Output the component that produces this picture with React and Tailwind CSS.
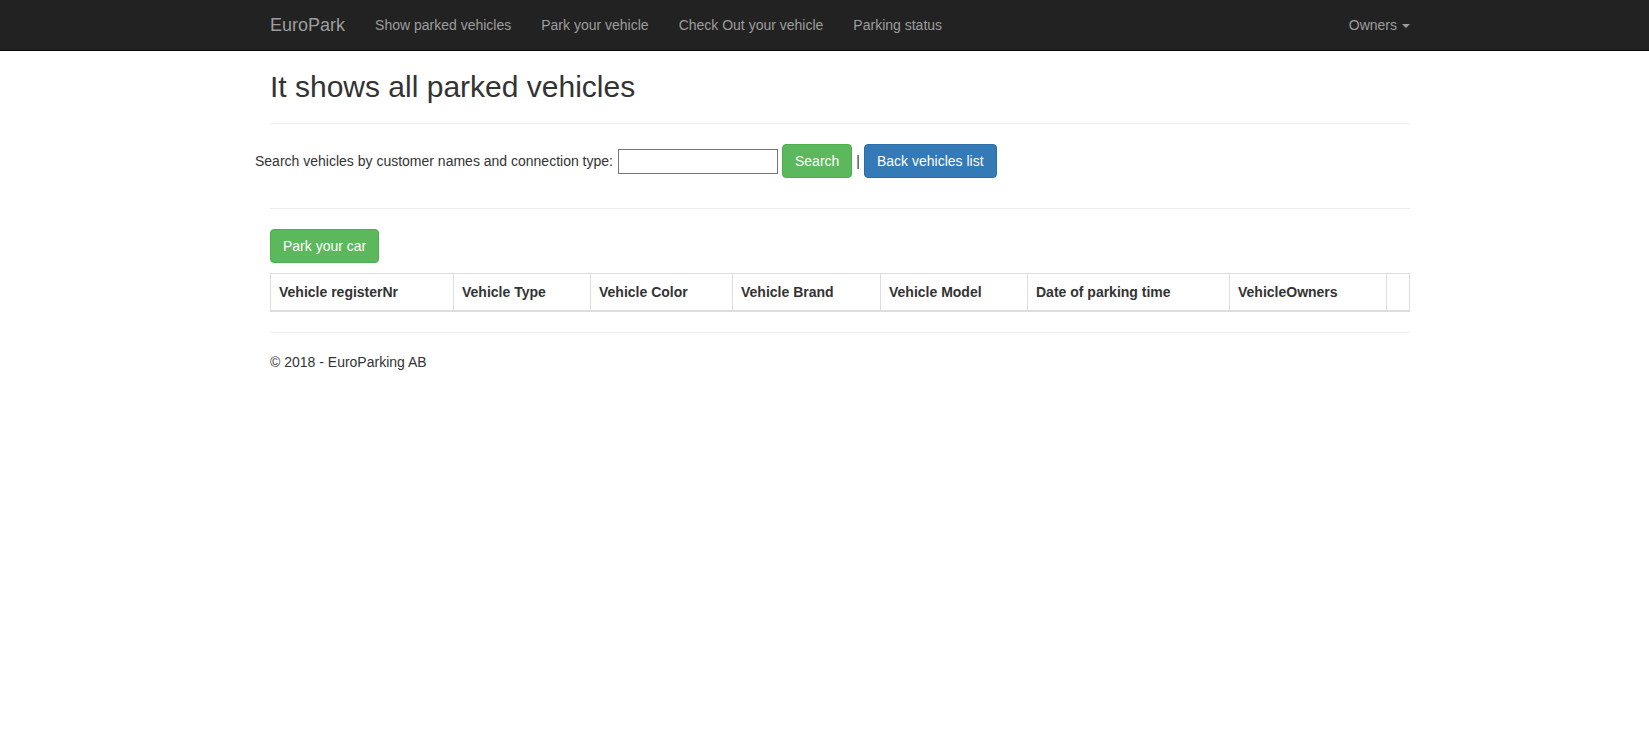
import React, { useState } from 'react';

const navLinks = ['Show parked vehicles', 'Park your vehicle', 'Check Out your vehicle', 'Parking status'];

const columns = [
    { label: 'Vehicle registerNr', width: 'w-[183px]' },
    { label: 'Vehicle Type', width: 'w-[137px]' },
    { label: 'Vehicle Color', width: 'w-[142px]' },
    { label: 'Vehicle Brand', width: 'w-[148px]' },
    { label: 'Vehicle Model', width: 'w-[147px]' },
    { label: 'Date of parking time', width: 'w-[202px]' },
    { label: 'VehicleOwners', width: 'w-[157px]' },
    { label: '', width: '' },
];

const App = () => {
    const [search, setSearch] = useState('');

    return (
        <div className="min-h-screen bg-white font-['Liberation_Sans',Arial,sans-serif] text-[14px] leading-[20px] text-[#333]">
            {/* Navbar */}
            <nav className="h-[51px] bg-[#222] border-b border-[#080808]">
                <div className="ml-[255px] w-[1170px] px-[15px] flex items-center h-[50px]">
                    <a href="#" className="-ml-[15px] px-[15px] py-[15px] text-[18px] leading-[20px] text-[#9d9d9d]">
                        EuroPark
                    </a>
                    {navLinks.map((link) => (
                        <a key={link} href="#" className="px-[15px] py-[15px] text-[#9d9d9d]">
                            {link}
                        </a>
                    ))}
                    <a href="#" className="ml-auto -mr-[15px] px-[15px] py-[15px] text-[#9d9d9d] flex items-center">
                        Owners
                        <span className="ml-[5px] mt-[1px] w-0 h-0 border-x-[4px] border-x-transparent border-t-[4px] border-t-[#9d9d9d]" />
                    </a>
                </div>
            </nav>

            <div className="ml-[255px] w-[1170px] px-[15px]">
                <h2 className="mt-[19px] text-[30px] leading-[33px] font-medium">It shows all parked vehicles</h2>
                <hr className="mt-[20px] border-0 border-t border-[#eee]" />

                {/* Search form */}
                <form className="mt-[20px] -ml-[15px] flex items-center gap-[4px] h-[34px]" onSubmit={(e) => e.preventDefault()}>
                    <label className="whitespace-nowrap">Search vehicles by customer names and connection type:</label>
                    <input
                        type="text"
                        value={search}
                        onChange={(e) => setSearch(e.target.value)}
                        className="ml-[1px] w-[160px] h-[25px] border border-[#767676] px-[2px] outline-none"
                    />
                    <button type="submit" className="px-[12px] py-[6px] rounded-[4px] border border-[#4cae4c] bg-[#5cb85c] text-white">
                        Search
                    </button>
                    <span>|</span>
                    <button type="button" className="px-[12px] py-[6px] rounded-[4px] border border-[#2e6da4] bg-[#337ab7] text-white">
                        Back vehicles list
                    </button>
                </form>

                <hr className="mt-[30px] border-0 border-t border-[#eee]" />

                <div className="mt-[20px]">
                    <button type="button" className="px-[12px] py-[6px] rounded-[4px] border border-[#4cae4c] bg-[#5cb85c] text-white">
                        Park your car
                    </button>
                </div>

                {/* Vehicles table */}
                <table className="mt-[10px] w-full table-fixed border-collapse border border-[#ddd]">
                    <thead>
                        <tr>
                            {columns.map((col, i) => (
                                <th
                                    key={i}
                                    className={`${col.width} p-[8px] text-left font-bold border border-[#ddd] border-b-2`}
                                >
                                    {col.label}
                                </th>
                            ))}
                        </tr>
                    </thead>
                </table>

                <hr className="mt-[20px] border-0 border-t border-[#eee]" />
                <footer className="mt-[19px]">
                    <p>© 2018 - EuroParking AB</p>
                </footer>
            </div>
        </div>
    );
};

export default App;
